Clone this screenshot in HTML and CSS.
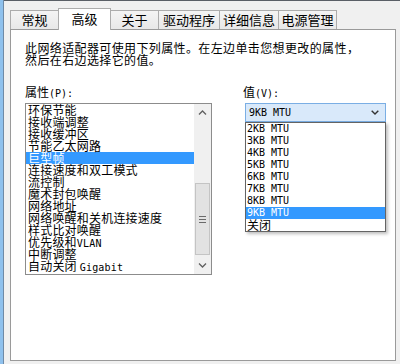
FILE: index.html
```html
<!DOCTYPE html>
<html lang="zh-CN">
<head>
<meta charset="utf-8">
<title>高级</title>
<link rel="stylesheet" href="styles.css">
</head>
<body>
<div class="strip"></div>
<div class="window">
  <div class="tabs">
    <div class="tab t1">常规</div>
    <div class="tab t2 active">高级</div>
    <div class="tab t3">关于</div>
    <div class="tab t4">驱动程序</div>
    <div class="tab t5">详细信息</div>
    <div class="tab t6">电源管理</div>
  </div>
  <div class="panel">
    <p class="desc">此网络适配器可使用下列属性。在左边单击您想更改的属性，<br>然后在右边选择它的值。</p>
    <div class="cols">
      <div class="left">
        <div class="label">属性<span class="a">(P):</span></div>
        <div class="listbox">
          <ul class="items">
            <li>环保节能</li>
            <li>接收端调整</li>
            <li>接收缓冲区</li>
            <li>节能乙太网路</li>
            <li class="sel">巨型帧</li>
            <li>连接速度和双工模式</li>
            <li>流控制</li>
            <li>魔术封包唤醒</li>
            <li>网络地址</li>
            <li>网络唤醒和关机连接速度</li>
            <li>样式比对唤醒</li>
            <li>优先级和<span class="a">VLAN</span></li>
            <li>中断调整</li>
            <li>自动关闭 <span class="a">Gigabit</span></li>
          </ul>
          <div class="scrollbar">
            <div class="arrow"><svg width="9" height="5" viewBox="0 0 9 5"><path d="M1 4.5 L4.5 1 L8 4.5" fill="none" stroke="#606060" stroke-width="1.3"/></svg></div>
            <div class="track"></div>
            <div class="thumb"><svg width="7" height="7" viewBox="0 0 7 7"><path d="M0 0.5H7M0 3.5H7M0 6.5H7" stroke="#6a6a6a" stroke-width="1"/></svg></div>
            <div class="gap"></div>
            <div class="arrow"><svg width="9" height="5" viewBox="0 0 9 5"><path d="M1 0.5 L4.5 4 L8 0.5" fill="none" stroke="#606060" stroke-width="1.3"/></svg></div>
          </div>
        </div>
      </div>
      <div class="right">
        <div class="label">值<span class="a">(V):</span></div>
        <div class="combo">
          <span class="a">9KB MTU</span>
          <svg width="8" height="5" viewBox="0 0 8 5"><path d="M0.7 0.7 L4 4 L7.3 0.7" fill="none" stroke="#333" stroke-width="1.4"/></svg>
        </div>
        <ul class="dropdown">
          <li class="a">2KB MTU</li>
          <li class="a">3KB MTU</li>
          <li class="a">4KB MTU</li>
          <li class="a">5KB MTU</li>
          <li class="a">6KB MTU</li>
          <li class="a">7KB MTU</li>
          <li class="a">8KB MTU</li>
          <li class="a sel">9KB MTU</li>
          <li>关闭</li>
        </ul>
      </div>
    </div>
  </div>
</div>
</body>
</html>
```
FILE: styles.css
```css
* { box-sizing: border-box; }

body {
  margin: 0;
  width: 400px;
  height: 364px;
  overflow: hidden;
  background: #f0f0f0;
  display: flex;
  font-family: "Noto Sans CJK SC", "Noto Sans", sans-serif;
  font-size: 12px;
  color: #000;
}

.strip {
  width: 4px;
  background: #8fc1ed;
  border-right: 1px solid #6f8aa6;
}

.window {
  flex: 1;
  border-top: 1px solid #5a5f66;
  padding: 7px 0 0 6px;
}

.tabs {
  display: flex;
  align-items: flex-end;
  height: 21px;
}

.tab {
  height: 19px;
  border: 1px solid #acacac;
  border-bottom: none;
  margin-left: -1px;
  background: linear-gradient(#f4f4f4, #e8e8e8);
  font-size: 13px;
  line-height: 18px;
  text-align: center;
  color: #000;
}

.t1 { width: 49px; margin-left: 0; }
.t2 { width: 53px; }
.t3 { width: 49px; }
.t4 { width: 62px; }
.t5 { width: 60px; }
.t6 { width: 59px; }

.tab.active {
  height: 22px;
  margin-bottom: -1px;
  padding-top: 1px;
  background: #fff;
  position: relative;
  z-index: 1;
}

.panel {
  width: 386px;
  height: 332px;
  border: 1px solid #9a9a9a;
  background: #fff;
  padding: 12px 0 0 14px;
}

.desc {
  margin: 0;
  line-height: 12px;
  letter-spacing: 0.38px;
}

.a {
  font-family: "DejaVu Sans Mono", "Liberation Mono", monospace;
  font-size: 10px;
}

.cols {
  display: flex;
  margin-top: 20px;
}

.left { width: 187px; }

.right {
  margin-left: 31px;
  width: 145px;
}

.label {
  height: 12px;
  line-height: 12px;
  margin-bottom: 5px;
  white-space: nowrap;
}

.listbox {
  width: 187px;
  height: 172px;
  border: 1px solid #8c8c8c;
  display: flex;
}

.items {
  flex: 1;
  margin: 0;
  padding: 0;
  list-style: none;
}

.items li {
  height: 12px;
  line-height: 12px;
  padding-left: 2px;
  white-space: nowrap;
  letter-spacing: 0.2px;
}

.items li.sel {
  background: #3399ff;
  color: #fff;
}

.scrollbar {
  width: 17px;
  display: flex;
  flex-direction: column;
  background: #f0f0f0;
}

.arrow {
  height: 17px;
  display: flex;
  align-items: center;
  justify-content: center;
}

.track { flex: 1; }

.thumb {
  height: 72px;
  margin: 0 1px;
  background: #e2e2e2;
  border: 1px solid #c4c4c4;
  display: flex;
  align-items: center;
  justify-content: center;
}

.gap { height: 2px; }

.combo {
  margin-left: 2px;
  width: 141px;
  height: 19px;
  border: 1px solid #7aaee4;
  background: #d9e9fa;
  display: flex;
  align-items: center;
  justify-content: space-between;
  padding: 0 6px 0 3px;
}

.dropdown {
  margin: 0 0 0 2px;
  padding: 0;
  list-style: none;
  width: 141px;
  border: 1px solid #646464;
  background: #fff;
  box-shadow: 2px 2px 3px rgba(0, 0, 0, 0.25);
}

.dropdown li {
  height: 12px;
  line-height: 12px;
  padding-left: 1px;
  white-space: nowrap;
}

.dropdown li:last-child {
  font-size: 12px;
  font-family: "Noto Sans CJK SC", sans-serif;
}

.dropdown li.sel {
  background: #3399ff;
  color: #fff;
}
```
